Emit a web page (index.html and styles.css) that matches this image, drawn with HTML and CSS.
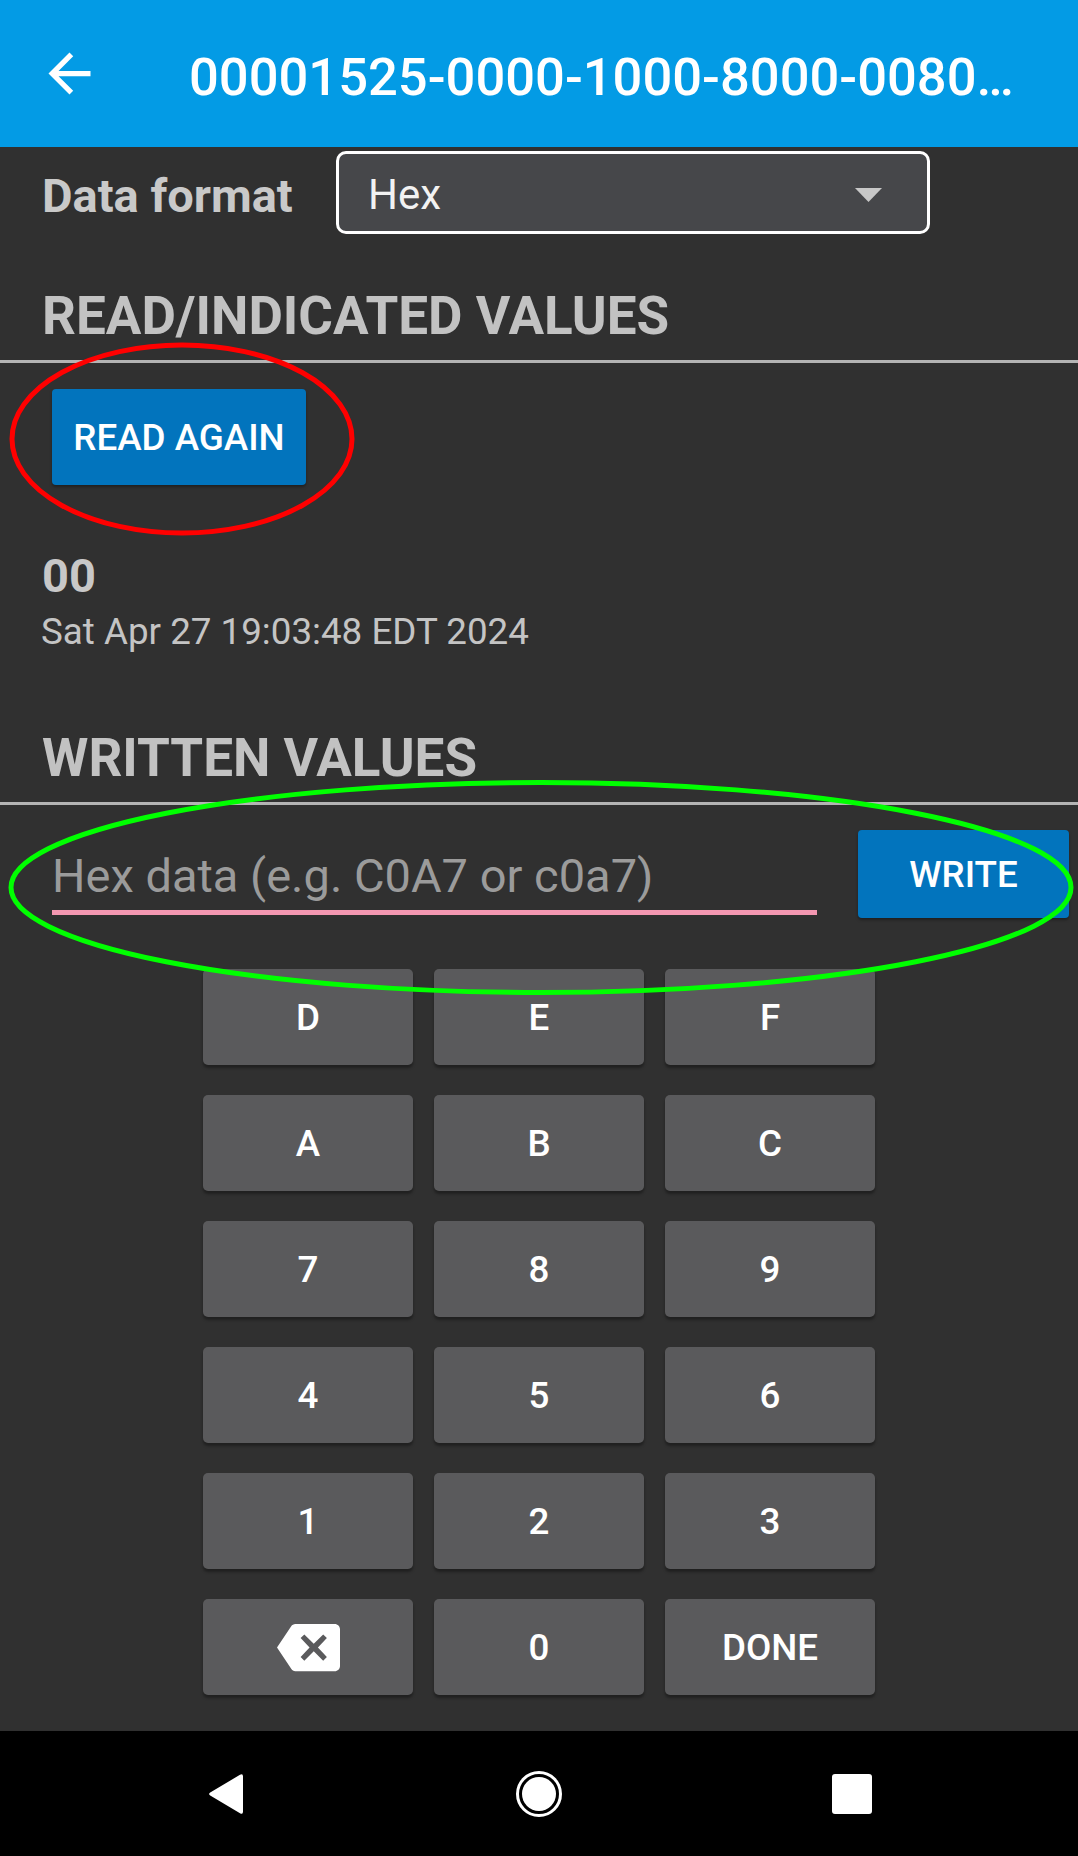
FILE: index.html
```html
<!DOCTYPE html>
<html lang="en">
<head>
<meta charset="utf-8">
<title>Characteristic</title>
<link rel="stylesheet" href="styles.css">
</head>
<body>
<div class="screen">
  <header class="appbar">
    <svg class="back" viewBox="0 0 24 24" aria-hidden="true"><path d="M20 11H7.83l5.59-5.59L12 4l-8 8 8 8 1.41-1.41L7.83 13H20v-2z"/></svg>
    <h1 class="title">00001525-0000-1000-8000-0080…</h1>
  </header>
  <main class="content">
    <div class="format-row">
      <span class="format-label">Data format</span>
      <div class="spinner">
        <span class="spinner-value">Hex</span>
        <svg class="caret" viewBox="0 0 27 14" aria-hidden="true"><polygon points="0,0 27,0 13.5,14"/></svg>
      </div>
    </div>
    <h2 class="section-title read-title">READ/INDICATED VALUES</h2>
    <hr class="divider">
    <button class="btn read-btn">READ AGAIN</button>
    <div class="value">00</div>
    <div class="timestamp">Sat Apr 27 19:03:48 EDT 2024</div>
    <h2 class="section-title written-title">WRITTEN VALUES</h2>
    <hr class="divider">
    <div class="write-row">
      <div class="hex-input">Hex data (e.g. C0A7 or c0a7)</div>
      <button class="btn write-btn">WRITE</button>
    </div>
    <div class="keypad">
      <button class="key">D</button>
      <button class="key">E</button>
      <button class="key">F</button>
      <button class="key">A</button>
      <button class="key">B</button>
      <button class="key">C</button>
      <button class="key">7</button>
      <button class="key">8</button>
      <button class="key">9</button>
      <button class="key">4</button>
      <button class="key">5</button>
      <button class="key">6</button>
      <button class="key">1</button>
      <button class="key">2</button>
      <button class="key">3</button>
      <button class="key key-icon" aria-label="Backspace">
        <svg class="backspace" viewBox="0 0 24 24" aria-hidden="true"><path fill-rule="evenodd" d="M22 3H7c-.69 0-1.23.35-1.59.88L0 12l5.41 8.11c.36.53.9.89 1.59.89h15c1.1 0 2-.9 2-2V5c0-1.1-.9-2-2-2zm-3 12.59L17.59 17 14 13.410 10.41 17 9 15.59 12.41 12 9 8.41 10.41 7 14 10.59 17.59 7 19 8.41 15.59 12 19 15.59z"/></svg>
      </button>
      <button class="key">0</button>
      <button class="key">DONE</button>
    </div>
  </main>
  <nav class="navbar">
    <span class="nav-slot"><svg class="nav-back" viewBox="0 0 36 42" aria-hidden="true"><path d="M35 3.5 V38.5 Q35 42 32 40.2 L2.2 22.6 Q0 21 2.2 19.4 L32 1.8 Q35 0 35 3.5 Z"/></svg></span>
    <span class="nav-slot"><svg class="nav-home" viewBox="0 0 48 48" aria-hidden="true"><circle cx="24" cy="24" r="21.5" fill="none" stroke="#fff" stroke-width="3"/><circle cx="24" cy="24" r="17" fill="#fff"/></svg></span>
    <span class="nav-slot"><span class="nav-recent"></span></span>
  </nav>
  <svg class="annotations" viewBox="0 0 1078 1856" aria-hidden="true">
    <ellipse cx="182" cy="439" rx="170" ry="94" fill="none" stroke="#ff0000" stroke-width="5"/>
    <ellipse cx="541" cy="887.5" rx="530" ry="105" fill="none" stroke="#00ff00" stroke-width="5"/>
  </svg>
</div>
</body>
</html>
```
FILE: styles.css
```css
html, body {
  margin: 0;
  padding: 0;
  background: #303030;
}

body {
  font-family: Roboto, "Noto Sans", "Liberation Sans", sans-serif;
}

.screen {
  position: relative;
  width: 1078px;
  height: 1856px;
  display: flex;
  flex-direction: column;
  overflow: hidden;
  background: #303030;
}

/* App bar */
.appbar {
  flex: none;
  height: 147px;
  background: #039be5;
  display: flex;
  align-items: flex-start;
}

.back {
  flex: none;
  width: 63px;
  height: 63px;
  margin: 42px 0 0 38px;
  fill: #ffffff;
}

.title {
  margin: 46px 0 0 88px;
  font-size: 52.5px;
  line-height: 62px;
  font-weight: 500;
  color: #ffffff;
  white-space: nowrap;
}

/* Content */
.content {
  flex: 1;
  display: flex;
  flex-direction: column;
  align-items: flex-start;
}

.format-row {
  display: flex;
  align-items: center;
  margin-top: 4px;
}

.format-label {
  box-sizing: border-box;
  flex: none;
  width: 336px;
  padding: 7px 0 0 42px;
  font-size: 47px;
  line-height: 56px;
  font-weight: 700;
  color: #c9c9c9;
}

.spinner {
  box-sizing: border-box;
  flex: none;
  width: 594px;
  height: 83px;
  border: 3px solid #ffffff;
  border-radius: 10px;
  background: #46474a;
  display: flex;
  align-items: center;
  padding: 5px 0 0 29px;
}

.spinner-value {
  font-size: 42px;
  line-height: 50px;
  color: #f2f2f2;
}

.caret {
  width: 27px;
  height: 14px;
  margin-left: auto;
  margin-right: 45px;
  fill: #c8c8c8;
}

.section-title {
  margin: 0 0 0 42px;
  font-size: 53px;
  line-height: 62px;
  font-weight: 700;
  color: #c2c2c2;
}

.read-title {
  margin-top: 51px;
}

.written-title {
  margin-top: 74px;
}

.divider {
  align-self: stretch;
  height: 3px;
  margin: 13px 0 0;
  border: none;
  background: #b4b4b4;
}

.btn {
  border: none;
  padding: 0;
  border-radius: 4px;
  background: #0274bd;
  color: #ffffff;
  font-family: inherit;
  font-size: 36.75px;
  font-weight: 500;
  box-shadow: 0 2px 3px rgba(0, 0, 0, 0.35);
}

.read-btn {
  margin: 26px 0 0 52px;
  width: 254px;
  height: 96px;
}

.value {
  margin: 63px 0 0 42px;
  font-size: 47px;
  line-height: 56px;
  font-weight: 700;
  color: #c8c8c8;
}

.timestamp {
  margin: 7px 0 0 41px;
  font-size: 36.75px;
  line-height: 42px;
  color: #c4c4c4;
}

.write-row {
  display: flex;
  align-items: flex-start;
  margin-top: 25px;
}

.hex-input {
  box-sizing: border-box;
  width: 765px;
  margin-left: 52px;
  padding: 18px 0 7px;
  font-size: 47px;
  line-height: 55px;
  color: #9b9b9b;
  border-bottom: 5px solid #f497b1;
  white-space: nowrap;
}

.write-btn {
  margin-left: 41px;
  width: 211px;
  height: 88px;
}

/* Keypad */
.keypad {
  align-self: stretch;
  margin-top: 51px;
  display: grid;
  grid-template-columns: repeat(3, 210px);
  grid-auto-rows: 96px;
  column-gap: 21px;
  row-gap: 30px;
  justify-content: center;
}

.key {
  border: none;
  padding: 0;
  border-radius: 5px;
  background: #5a5a5c;
  color: #ffffff;
  font-family: inherit;
  font-size: 36.75px;
  font-weight: 500;
  box-shadow: 0 3px 3px rgba(0, 0, 0, 0.35);
  display: flex;
  align-items: center;
  justify-content: center;
}

.backspace {
  width: 63px;
  height: 63px;
  fill: #ffffff;
}

/* Navigation bar */
.navbar {
  flex: none;
  height: 125px;
  background: #000000;
  display: flex;
  align-items: center;
  justify-content: center;
  gap: 213px;
}

.nav-slot {
  width: 100px;
  display: flex;
  align-items: center;
  justify-content: center;
}

.nav-back {
  width: 36px;
  height: 42px;
  fill: #ffffff;
}

.nav-home {
  width: 48px;
  height: 48px;
}

.nav-recent {
  width: 40px;
  height: 40px;
  border-radius: 3px;
  background: #ffffff;
}

/* Annotation overlay */
.annotations {
  position: absolute;
  left: 0;
  top: 0;
  width: 1078px;
  height: 1856px;
  pointer-events: none;
}
```
